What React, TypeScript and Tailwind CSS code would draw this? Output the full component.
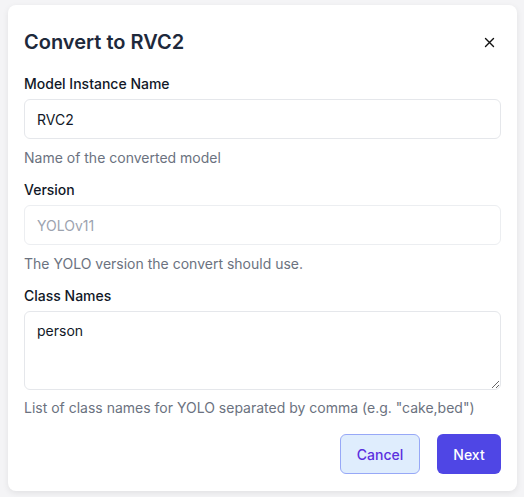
import React from "react";

export default function App() {
  return (
    <div
      className="w-[524px] h-[497px] overflow-hidden bg-[#f4f4f6] pt-[5px] pl-[8px] pr-[7px]"
      style={{ fontFamily: "Inter, 'Noto Sans', sans-serif" }}
    >
      <div className="relative h-[486px] rounded-[8px] bg-white shadow-[0_2px_6px_rgba(0,0,0,0.08)] px-[16px] pt-[23px]">
        <div className="flex items-center justify-between">
          <h2 className="text-[20px] leading-[28px] font-semibold text-[#1e293b]">Convert to RVC2</h2>
          <button className="mr-[4px] text-[#111] flex items-center justify-center w-[16px] h-[16px]">
            <svg width="11" height="11" viewBox="0 0 11 11" fill="none" stroke="currentColor" strokeWidth="1.4" strokeLinecap="round">
              <path d="M1.5 1.5 L9.5 9.5 M9.5 1.5 L1.5 9.5" />
            </svg>
          </button>
        </div>

        <div className="mt-[18px] flex flex-col">
          <label className="text-[14px] leading-[20px] font-medium text-[#111827]">Model Instance Name</label>
          <input
            defaultValue="RVC2"
            className="mt-[5px] h-[40px] w-full rounded-[6px] border border-[#e5e7eb] px-[12px] text-[14px] text-[#111827] outline-none"
          />
          <p className="mt-[9px] text-[14px] leading-[20px] text-[#6b7280]">Name of the converted model</p>

          <label className="mt-[12px] text-[14px] leading-[20px] font-medium text-[#111827]">Version</label>
          <input
            placeholder="YOLOv11"
            className="mt-[5px] h-[40px] w-full rounded-[6px] border border-[#eceef1] px-[12px] text-[14px] text-[#111827] placeholder:text-[#9ca3af] outline-none"
          />
          <p className="mt-[9px] text-[14px] leading-[20px] text-[#6b7280]">The YOLO version the convert should use.</p>

          <label className="mt-[12px] text-[14px] leading-[20px] font-medium text-[#111827]">Class Names</label>
          <textarea
            defaultValue="person"
            className="mt-[5px] h-[79px] w-full rounded-[6px] border border-[#e5e7eb] px-[12px] py-[9px] text-[14px] leading-[20px] text-[#111827] outline-none"
          />
          <p className="mt-[8px] text-[14px] leading-[20px] text-[#6b7280]">List of class names for YOLO separated by comma (e.g. "cake,bed")</p>

          <div className="mt-[16px] flex justify-end gap-[17px]">
            <button className="h-[40px] w-[80px] rounded-[6px] border border-[#97a8f7] bg-[#dfedfd] text-[14px] font-medium text-[#5b30df]">
              Cancel
            </button>
            <button className="h-[40px] w-[64px] rounded-[6px] bg-[#4f46e5] text-[14px] font-medium text-white">
              Next
            </button>
          </div>
        </div>
      </div>
    </div>
  );
}
